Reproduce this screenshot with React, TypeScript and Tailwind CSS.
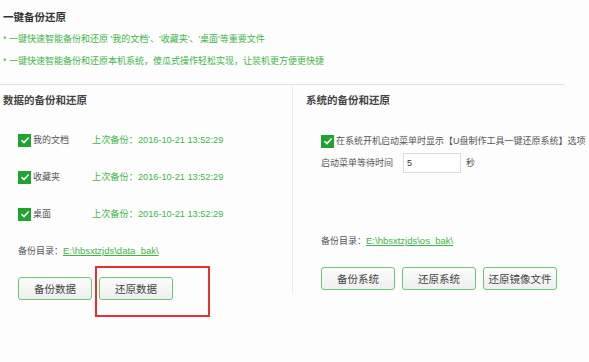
export default function App() {
  const rows = ["我的文档", "收藏夹", "桌面"];

  const Check = () => (
    <span className="flex h-[13px] w-[13px] shrink-0 items-center justify-center bg-[#1fa52f]">
      <svg width="10" height="10" viewBox="0 0 10 10">
        <path d="M1.5 5.2 L4 7.6 L8.6 2.4" fill="none" stroke="#fff" strokeWidth="1.5" />
      </svg>
    </span>
  );

  const Btn = ({ label }: { label: string }) => (
    <button className="h-[23px] w-[74px] shrink-0 rounded-[3px] border border-[#6cc870] bg-gradient-to-b from-[#fbfbfb] to-[#efefef] text-[10.5px] text-[#444]">
      {label}
    </button>
  );

  return (
    <div
      className="relative h-[362px] w-[589px] overflow-hidden bg-[#fdfdfd] text-[9px] leading-[16px] text-[#555]"
      style={{ fontFamily: '"Liberation Sans", "Noto Sans CJK SC", sans-serif' }}
    >
      {/* Header */}
      <div className="pl-[3px] pt-[9px]">
        <div className="text-[10.5px] font-bold text-[#333]">一键备份还原</div>
        <div className="mt-[6px] text-[#3fb548]">* 一键快速智能备份和还原 '我的文档'、'收藏夹'、'桌面'等重要文件</div>
        <div className="mt-[6px] text-[#3fb548]">* 一键快速智能备份和还原本机系统，傻瓜式操作轻松实现，让装机更方便更快捷</div>
      </div>

      <div className="mt-[15px] flex w-[565px] border-t border-[#e2e2e2]">
        {/* Data backup */}
        <div className="h-[209px] w-[293px] shrink-0 border-r border-[#ececec]">
          <div className="pl-[3px] pt-[7px] text-[10.5px] font-bold text-[#444]">数据的备份和还原</div>
          <div className="mt-[24px] flex flex-col gap-[21px] pl-[18px]">
            {rows.map((r) => (
              <div key={r} className="flex h-[16px] items-center">
                <Check />
                <span className="ml-[2px] w-[59px]">{r}</span>
                <span className="text-[9.2px] text-[#3fb548]">上次备份：2016-10-21 13:52:29</span>
              </div>
            ))}
          </div>
          <div className="mt-[21px] pl-[18px]">
            备份目录：<span className="text-[9.5px] text-[#3fb548] underline">E:\hbsxtzjds\data_bak\</span>
          </div>
          <div className="mt-[18px] flex gap-[7px] pl-[18px]">
            <Btn label="备份数据" />
            <Btn label="还原数据" />
          </div>
        </div>

        {/* System backup */}
        <div className="min-w-0 flex-1">
          <div className="pl-[13px] pt-[7px] text-[10.5px] font-bold text-[#444]">系统的备份和还原</div>
          <div className="mt-[25px] flex h-[16px] items-center pl-[28px]">
            <Check />
            <span className="ml-[2px] whitespace-nowrap">在系统开机启动菜单时显示【U盘制作工具一键还原系统】选项</span>
          </div>
          <div className="mt-[4px] flex items-center pl-[28px]">
            <span className="w-[82px] shrink-0">启动菜单等待时间</span>
            <div className="h-[20px] w-[58px] shrink-0 border border-[#dcdcdc] bg-white pl-[3px] leading-[18px] text-[#333]">5</div>
            <span className="ml-[5px]">秒</span>
          </div>
          <div className="mt-[60px] pl-[28px]">
            备份目录：<span className="text-[9.5px] text-[#3fb548] underline">E:\hbsxtzjds\os_bak\</span>
          </div>
          <div className="mt-[18px] flex gap-[7px] pl-[28px]">
            <Btn label="备份系统" />
            <Btn label="还原系统" />
            <Btn label="还原镜像文件" />
          </div>
        </div>
      </div>

      {/* Red highlight */}
      <div className="absolute left-[95px] top-[266px] h-[51px] w-[115px] border-2 border-[#e8302f]" />
    </div>
  );
}
